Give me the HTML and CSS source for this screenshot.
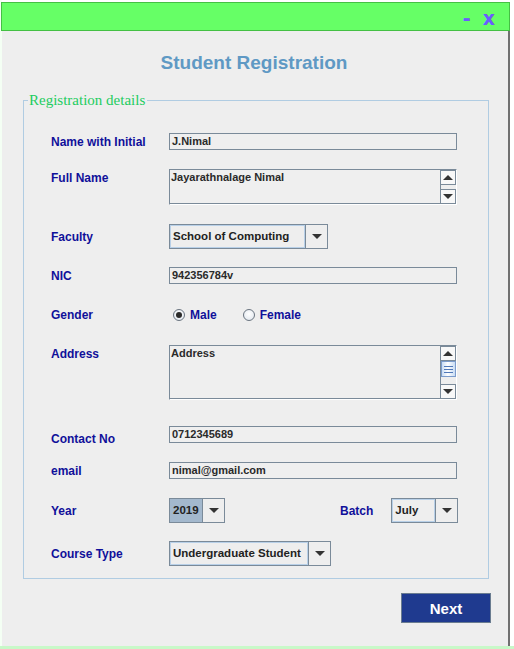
FILE: index.html
```html
<!DOCTYPE html>
<html>
<head>
<meta charset="utf-8">
<link rel="stylesheet" href="styles.css">
</head>
<body>
<div class="desk">
  <div class="window">
    <div class="titlebar">
      <span class="tb-btn tb-min">-</span>
      <span class="tb-btn tb-close">x</span>
    </div>
    <div class="content">
      <h1 class="title">Student Registration</h1>
      <fieldset class="group">
        <legend class="legend">Registration details</legend>
        <div class="rows">
          <div class="row r1">
            <span class="label">Name with Initial</span>
            <div class="field">J.Nimal</div>
          </div>
          <div class="row r2 top">
            <span class="label">Full Name</span>
            <div class="area area-small">
              <div class="area-text">Jayarathnalage Nimal</div>
              <div class="sbar">
                <div class="sbtn"><span class="arr up"></span></div>
                <div class="strack"></div>
                <div class="sbtn"><span class="arr down"></span></div>
              </div>
            </div>
          </div>
          <div class="row r3">
            <span class="label">Faculty</span>
            <div class="combo combo-faculty">
              <div class="combo-text">School of Computing</div>
              <div class="combo-btn"><span class="arr down"></span></div>
            </div>
          </div>
          <div class="row r4">
            <span class="label">NIC</span>
            <div class="field">942356784v</div>
          </div>
          <div class="row r5">
            <span class="label">Gender</span>
            <div class="radios">
              <span class="radio checked"></span><span class="radio-label">Male</span>
              <span class="radio"></span><span class="radio-label">Female</span>
            </div>
          </div>
          <div class="row r6 top">
            <span class="label">Address</span>
            <div class="area area-big">
              <div class="area-text">Address</div>
              <div class="sbar">
                <div class="sbtn"><span class="arr up"></span></div>
                <div class="sthumb"><i></i><i></i><i></i></div>
                <div class="strack"></div>
                <div class="sbtn"><span class="arr down"></span></div>
              </div>
            </div>
          </div>
          <div class="row r7">
            <span class="label label-low">Contact No</span>
            <div class="field">0712345689</div>
          </div>
          <div class="row r8">
            <span class="label">email</span>
            <div class="field">nimal@gmail.com</div>
          </div>
          <div class="row r9">
            <span class="label">Year</span>
            <div class="combo combo-year">
              <div class="combo-text selected">2019</div>
              <div class="combo-btn"><span class="arr down"></span></div>
            </div>
            <span class="label label-batch">Batch</span>
            <div class="combo combo-batch">
              <div class="combo-text">July</div>
              <div class="combo-btn"><span class="arr down"></span></div>
            </div>
          </div>
          <div class="row r10">
            <span class="label">Course Type</span>
            <div class="combo combo-course">
              <div class="combo-text">Undergraduate Student</div>
              <div class="combo-btn"><span class="arr down"></span></div>
            </div>
          </div>
        </div>
      </fieldset>
      <div class="actions">
        <button class="next">Next</button>
      </div>
    </div>
  </div>
</div>
</body>
</html>
```

FILE: styles.css
```css
html, body {
  margin: 0;
  padding: 0;
}
body {
  width: 514px;
  height: 649px;
  overflow: hidden;
  background: #ffffff;
  font-family: "Liberation Sans", Arial, sans-serif;
}
.desk {
  height: 646px;
  border-bottom: 3px solid #c8f8c8;
  background: linear-gradient(to right, #f4fff4 0, #f4fff4 2px, transparent 2px);
}
.window {
  width: 510px;
  padding-top: 2px;
}
.titlebar {
  margin-left: 1px;
  height: 27px;
  background: #66ff66;
  border: 1px solid #44c044;
  display: flex;
  justify-content: flex-end;
  align-items: flex-end;
  gap: 12px;
  padding-right: 14px;
  box-sizing: content-box;
  width: 493px;
}
.tb-btn {
  color: #6a5cff;
  font-weight: bold;
  font-family: "DejaVu Sans", sans-serif;
  font-size: 19px;
  line-height: 24px;
}
.tb-min {
  font-size: 20px;
}
.content {
  margin-left: 2px;
  width: 506px;
  height: 614px;
  background: #eeeeee;
  border-right: 2px solid #707070;
  padding-top: 1px;
  box-sizing: content-box;
}
.title {
  margin: 20px 0 0 0;
  text-align: center;
  font-size: 19px;
  line-height: 22px;
  font-weight: bold;
  color: #5f99c4;
  padding-right: 2px;
}
.group {
  margin: 18px 0 0 21px;
  width: 466px;
  height: 487px;
  box-sizing: border-box;
  border: 1px solid #b0cce2;
  padding: 0;
  min-width: 0;
}
.legend {
  margin-left: 4px;
  padding: 0 2px 0 1px;
  font-family: "Liberation Serif", "Times New Roman", serif;
  font-size: 15px;
  line-height: 16px;
  color: #22cc60;
}
.rows {
  padding: 25px 0 0 27px;
  display: flex;
  flex-direction: column;
}
.row {
  display: flex;
  align-items: center;
}
.row.top {
  align-items: flex-start;
}
.r2, .r3, .r8, .r9 { margin-top: 19px; }
.r4, .r10 { margin-top: 18px; }
.r5 { margin-top: 22px; height: 18px; }
.r6 { margin-top: 21px; }
.r7 { margin-top: 26px; }
.label {
  width: 118px;
  flex: none;
  font-size: 12px;
  font-weight: bold;
  color: #10109a;
  line-height: 14px;
}
.row.top .label {
  margin-top: 2px;
}
.label-low {
  position: relative;
  top: 4px;
}
.label-batch {
  width: auto;
  margin-left: 115px;
  margin-right: 18px;
}
.field {
  width: 288px;
  height: 17px;
  box-sizing: border-box;
  border: 1px solid #7a8a99;
  background: #efefef;
  font-size: 11px;
  font-weight: bold;
  color: #2a2a2a;
  line-height: 15px;
  padding-left: 2px;
}
.area {
  width: 288px;
  box-sizing: border-box;
  border: 1px solid #7a8a99;
  border-right-color: #ffffff;
  border-bottom-color: #ffffff;
  background: #efefef;
  display: flex;
}
.area-small { height: 36px; }
.area-big { height: 55px; }
.area-text {
  flex: 1;
  font-size: 11px;
  font-weight: bold;
  color: #2a2a2a;
  line-height: 14px;
  padding-left: 1px;
  border-bottom: 1px solid #7a8a99;
}
.sbar {
  width: 15px;
  display: flex;
  flex-direction: column;
  border-left: 1px solid #7a8a99;
  background: #f0f0f0;
}
.sbtn {
  height: 15px;
  box-sizing: border-box;
  border: 1px solid #7a8a99;
  border-left: none;
  background: #f8f8f8;
  display: flex;
  align-items: center;
  justify-content: center;
}
.strack {
  flex: 1;
  background: #eeeeee;
}
.sthumb {
  height: 16px;
  box-sizing: border-box;
  border: 1px solid #7c9ccc;
  background: linear-gradient(to right, #c8dcf4, #ffffff 45%, #c8dcf4);
  display: flex;
  flex-direction: column;
  justify-content: center;
  align-items: center;
  gap: 2px;
}
.sthumb i {
  display: block;
  width: 9px;
  height: 1px;
  background: #5078b8;
}
.arr {
  width: 0;
  height: 0;
  border-left: 5px solid transparent;
  border-right: 5px solid transparent;
}
.arr.up { border-bottom: 5px solid #333333; }
.arr.down { border-top: 5px solid #333333; }
.combo {
  height: 25px;
  box-sizing: border-box;
  border: 1px solid #7a8a99;
  display: flex;
  background: #eeeeee;
}
.combo-text {
  flex: 1;
  box-sizing: border-box;
  border: 1px solid #b8d0e8;
  font-size: 11.5px;
  font-weight: bold;
  color: #222222;
  line-height: 21px;
  padding-left: 2px;
  white-space: nowrap;
}
.combo-text.selected {
  background: #a3b8cd;
  border-color: #a3b8cd;
}
.combo-btn {
  width: 21px;
  border-left: 1px solid #7a8a99;
  display: flex;
  align-items: center;
  justify-content: center;
  background: #eeeeee;
}
.combo-faculty { width: 159px; }
.combo-year { width: 56px; }
.combo-batch { width: 67px; }
.combo-course { width: 162px; }
.radios {
  display: flex;
  align-items: center;
  padding-left: 4px;
}
.radio {
  width: 12px;
  height: 12px;
  box-sizing: border-box;
  border-radius: 50%;
  border: 1px solid #6a7480;
  background: radial-gradient(circle at 50% 40%, #ffffff, #dde4ec);
  display: inline-flex;
  align-items: center;
  justify-content: center;
}
.radio.checked::after {
  content: "";
  width: 6px;
  height: 6px;
  border-radius: 50%;
  background: #2a2a2a;
}
.radio-label {
  font-size: 12px;
  font-weight: bold;
  color: #10109a;
  margin-left: 5px;
  margin-right: 26px;
}
.actions {
  display: flex;
  justify-content: flex-end;
  padding-right: 17px;
  margin-top: 14px;
}
.next {
  width: 90px;
  height: 30px;
  background: #1f3a8f;
  border: 1px solid #6a7c90;
  color: #ffffff;
  font-family: "Liberation Sans", Arial, sans-serif;
  font-size: 15px;
  font-weight: bold;
  padding: 0;
}
```
